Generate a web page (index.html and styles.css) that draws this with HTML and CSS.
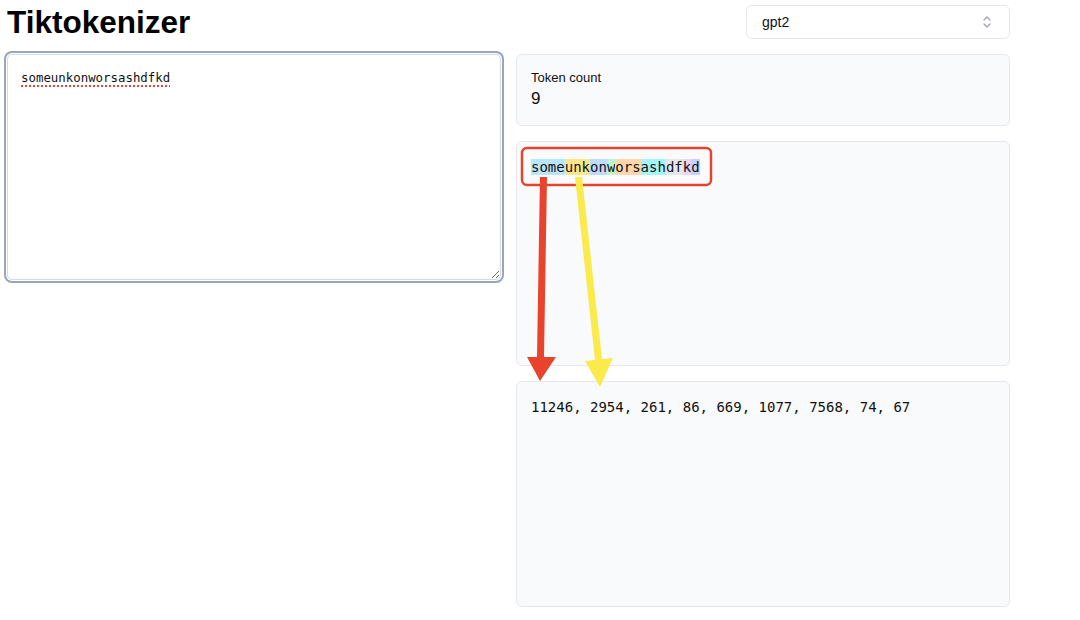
FILE: index.html
```html
<!DOCTYPE html>
<html lang="en">
<head>
  <meta charset="UTF-8">
  <meta name="viewport" content="width=device-width, initial-scale=1.0">
  <title>Tiktokenizer</title>
  <link rel="stylesheet" href="styles.css">
</head>
<body>

<div class="page">
  <header class="topbar">
    <h1 class="title">Tiktokenizer</h1>
    <div class="model-select">
      <span>gpt2</span>
      <svg class="chevrons" width="12" height="14" viewBox="0 0 12 14" fill="none" stroke="#9ca3af" stroke-width="1.3" stroke-linecap="round" stroke-linejoin="round">
        <path d="M3 5 L6 2 L9 5"/>
        <path d="M3 9 L6 12 L9 9"/>
      </svg>
    </div>
  </header>

  <main class="columns">
    <textarea class="input" spellcheck="false">someunkonworsashdfkd</textarea>

    <section class="output">
      <div class="panel count">
        <div class="count-label">Token count</div>
        <div class="count-value">9</div>
      </div>

      <div class="panel tokens">
        <span class="tok c1">some</span><span class="tok c2">unk</span><span class="tok c3">on</span><span class="tok c4">w</span><span class="tok c5">ors</span><span class="tok c6">ash</span><span class="tok c7">df</span><span class="tok c8">k</span><span class="tok c9">d</span>
      </div>

      <div class="panel ids">11246, 2954, 261, 86, 669, 1077, 7568, 74, 67</div>
    </section>
  </main>
</div>

<!-- markup drawn on top: box round the tokens and the two arrows -->
<svg class="marks" width="1080" height="620" viewBox="0 0 1080 620">
  <rect x="522" y="148" width="189" height="37" rx="5" fill="none" stroke="#e5432e" stroke-width="2.5"/>
  <polygon points="540,177 547,177 544,357 556,357 540,381 527,357 537,357" fill="#e8432c"/>
  <polygon points="575,177 582,177 602,359 613,358 600,387 585,361 595,360" fill="#fbea4b"/>
</svg>

</body>
</html>
```

FILE: styles.css
```css
body {
  margin: 0;
  padding: 0;
  background-color: #fff;
  font-family: "Liberation Sans", Arial, sans-serif;
  color: #111;
}

.page {
  width: 1003px;
  margin-left: 7px;
  padding-top: 5px;
}

.topbar {
  display: flex;
  justify-content: space-between;
  align-items: center;
  height: 34px;
}

.title {
  margin: 0;
  font-size: 31.5px;
  font-weight: bold;
  line-height: 34px;
  color: #000;
}

.model-select {
  width: 264px;
  height: 34px;
  box-sizing: border-box;
  display: flex;
  align-items: center;
  justify-content: space-between;
  padding: 0 16px 0 15px;
  border: 1px solid #e5e7eb;
  border-radius: 6px;
  background-color: #fff;
  font-size: 14px;
}

.columns {
  display: grid;
  grid-template-columns: 494px 494px;
  column-gap: 15px;
  margin-top: 15px;
  align-items: start;
}

.input {
  height: 226px;
  box-sizing: border-box;
  padding: 14px 13px;
  border: 1px solid #d5dbe3;
  border-radius: 5px;
  box-shadow: 0 0 0 1px #fff, 0 0 0 3px #9aa6b6;
  outline: none;
  resize: vertical;
  font-family: "DejaVu Sans Mono", monospace;
  font-size: 12.4px;
  line-height: 18px;
  color: #111;
  text-decoration-line: underline;
  text-decoration-style: dotted;
  text-decoration-color: #e0473f;
  text-decoration-thickness: 1.5px;
  text-underline-offset: 3px;
}

.output {
  display: flex;
  flex-direction: column;
  gap: 15px;
}

.panel {
  box-sizing: border-box;
  padding: 15px 14px;
  border: 1px solid #e5e7eb;
  border-radius: 6px;
  background-color: #f8fafc;
}

.count {
  height: 72px;
  padding-top: 14px;
}

.count-label {
  font-size: 13px;
  line-height: 18px;
}

.count-value {
  font-size: 17px;
  line-height: 24px;
}

.tokens,
.ids {
  font-family: "DejaVu Sans Mono", monospace;
  font-size: 14px;
  line-height: 20px;
  color: #111;
}

.tokens {
  height: 225px;
}

.ids {
  height: 226px;
}

/* token highlight colours */
.c1 { background-color: #bae6fd; }
.c2 { background-color: #fde68a; }
.c3 { background-color: #bfdbfe; }
.c4 { background-color: #bbf7d0; }
.c5 { background-color: #fed7aa; }
.c6 { background-color: #a5f3fc; }
.c7 { background-color: #e5e7eb; }
.c8 { background-color: #e9d5ff; }
.c9 { background-color: #c7d2fe; }

.marks {
  position: absolute;
  top: 0;
  left: 0;
  pointer-events: none;
}
```
